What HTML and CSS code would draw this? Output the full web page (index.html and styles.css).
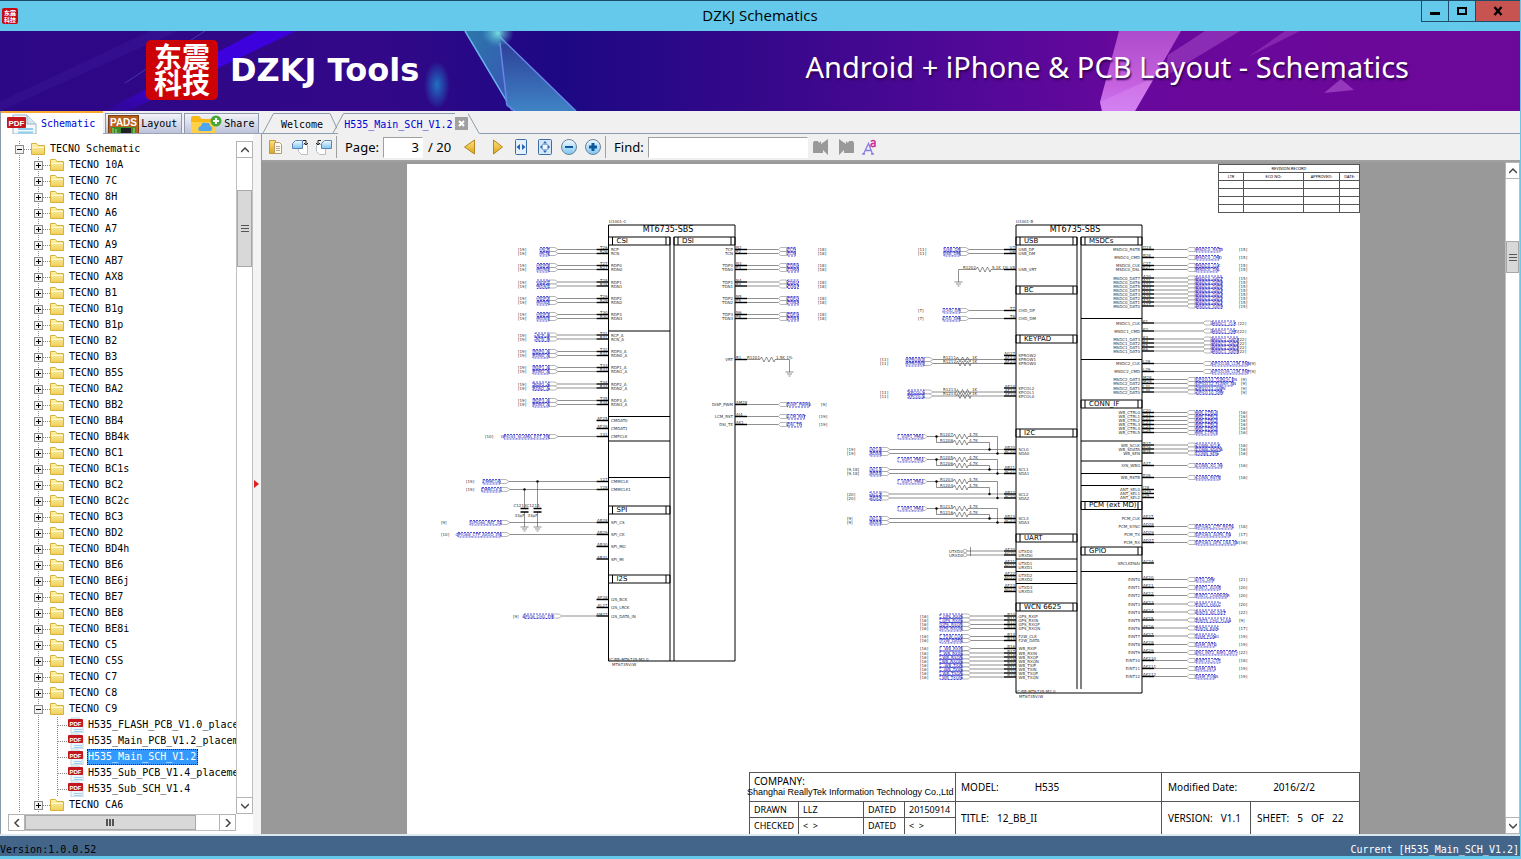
FILE: index.html
```html
<!DOCTYPE html>
<html lang="en">

<head>
    <meta charset="UTF-8">
    <meta name="viewport" content="width=device-width, initial-scale=1.0">
    <title>DZKJ Schematics</title>
    <link rel="stylesheet" href="styles.css">
</head>

<body>
    <!-- shared icons -->
    <svg class="defs" aria-hidden="true">
        <defs>
            <linearGradient id="gFolder" x1="0" y1="0" x2="0" y2="1">
                <stop offset="0" stop-color="#fff3b0" />
                <stop offset="1" stop-color="#f0cf58" />
            </linearGradient>
            <linearGradient id="gGold" x1="0" y1="0" x2="0" y2="1">
                <stop offset="0" stop-color="#ffe27a" />
                <stop offset="1" stop-color="#d9a520" />
            </linearGradient>
            <linearGradient id="gBlue" x1="0" y1="0" x2="0" y2="1">
                <stop offset="0" stop-color="#f4fbff" />
                <stop offset="1" stop-color="#7cc4f0" />
            </linearGradient>
        </defs>
        <symbol id="folder" viewBox="0 0 14 14">
            <path d="M.5 12.500v-11h5l1.500 2h6.500v9z" fill="url(#gFolder)" stroke="#d8b13c" />
            <path d="M1 5.500h12" stroke="#fff8d0" />
        </symbol>
        <symbol id="pdf" viewBox="0 0 16 16">
            <path d="M3 1h8l4 4v11H3z" fill="#eef6fc" stroke="#a9c4d8" stroke-width=".7" />
            <path d="M6 12.500h8M6 14.500h8" stroke="#9fd0ee" />
            <rect x="0" y="2" width="15" height="8" rx="1" fill="#c4161c" />
            <text x="7.500" y="8.500" text-anchor="middle" class="pdf-text">PDF</text>
        </symbol>
    </svg>

    <header class="titlebar">
        <svg class="app-icon" viewBox="0 0 16 16">
            <rect width="16" height="16" rx="2" fill="#c80a10" />
            <text x="8" y="7" text-anchor="middle" class="seal-small">东震</text>
            <text x="8" y="14" text-anchor="middle" class="seal-small">科技</text>
        </svg>
        <h1>DZKJ Schematics</h1>
        <div class="window-buttons">
            <button aria-label="Minimize"><svg width="10" height="10"><rect y="6" width="10" height="3" /></svg></button>
            <button aria-label="Maximize"><svg width="10" height="10"><rect x="1" y="2" width="8" height="6" fill="none" stroke="#000" stroke-width="2" /></svg></button>
            <button class="close" aria-label="Close"><svg width="10" height="10"><path d="M1.500 1l7 8M8.500 1l-7 8" stroke="#000" stroke-width="2.400" /></svg></button>
        </div>
    </header>

    <div class="banner">
        <svg class="banner-art" viewBox="0 0 1520 80" preserveAspectRatio="none" aria-hidden="true">
            <defs>
                <linearGradient id="bBase">
                    <stop offset="0" stop-color="#2c0786" />
                    <stop offset=".25" stop-color="#320888" />
                    <stop offset=".37" stop-color="#1d0884" />
                    <stop offset=".5" stop-color="#35088a" />
                    <stop offset=".66" stop-color="#560899" />
                    <stop offset=".75" stop-color="#69089c" />
                    <stop offset="1" stop-color="#6c0899" />
                </linearGradient>
                <linearGradient id="bBeam" x1="1" y1="0" x2="0" y2="1">
                    <stop offset="0" stop-color="#3d00dc" />
                    <stop offset=".6" stop-color="#3c02e0" />
                    <stop offset="1" stop-color="#3c02e0" stop-opacity=".1" />
                </linearGradient>
                <linearGradient id="bCyan" x1="0" y1="0" x2="1" y2="1">
                    <stop offset="0" stop-color="#2a78a8" />
                    <stop offset="1" stop-color="#3d52b8" />
                </linearGradient>
                <linearGradient id="bTri" x1="0" y1="0" x2="0" y2="1">
                    <stop offset="0" stop-color="#2c3a94" />
                    <stop offset="1" stop-color="#3f83c4" />
                </linearGradient>
                <linearGradient id="bPink" x1="0" y1="0" x2="0" y2="1">
                    <stop offset="0" stop-color="#ac4bcb" />
                    <stop offset=".7" stop-color="#c763e0" />
                    <stop offset="1" stop-color="#c878f0" />
                </linearGradient>
                <radialGradient id="bGlow">
                    <stop offset="0" stop-color="#1f7cc8" stop-opacity=".9" />
                    <stop offset="1" stop-color="#1f7cc8" stop-opacity="0" />
                </radialGradient>
                <radialGradient id="bSpark">
                    <stop offset="0" stop-color="#7fe8e8" stop-opacity=".9" />
                    <stop offset="1" stop-color="#4fc0d0" stop-opacity="0" />
                </radialGradient>
            </defs>
            <rect width="1520" height="80" fill="url(#bBase)" />
            <path d="M258 0h38L128 80h-24z" fill="url(#bBeam)" />
            <path d="M150 0h28L0 80h-20z" fill="#4a2aa8" opacity=".22" />
            <path d="M205 0L125 52" stroke="#6060c8" opacity=".5" />
            <path d="M465 0h35l12 80z" fill="url(#bCyan)" />
            <path d="M465 0l47 79" stroke="#6ab4ee" stroke-width="1.500" />
            <path d="M500 6l76 74h-63l-7-6z" fill="url(#bTri)" />
            <path d="M500 6l76 74M500 12l7 62 8 6" fill="none" stroke="#6686e8" stroke-width="1.500" />
            <ellipse cx="498" cy="2" rx="16" ry="14" fill="url(#bSpark)" />
            <ellipse cx="437" cy="54" rx="13" ry="24" fill="url(#bGlow)" />
            <path d="M1205 0h35l-76 46 4-22z" fill="#9638bc" opacity=".75" />
            <path d="M1285 0h15l-52 26z" fill="#9638bc" opacity=".6" />
            <path d="M1119 0h62l-46 80h-33l-2-9z" fill="url(#bPink)" />
            <path d="M1100 71l55-25-20 34h-33z" fill="#dc8cf4" opacity=".45" />
            <path d="M1324 62l17-14 13 11z" fill="#9638bc" />
        </svg>
        <div class="seal">东震<br>科技</div>
        <strong>DZKJ Tools</strong>
        <p>Android + iPhone &amp; PCB Layout - Schematics</p>
    </div>

    <main>
        <aside class="sidebar">
            <div class="side-tabs">
                <button class="side-tab active">
                    <svg width="32" height="20" viewBox="0 0 32 20">
                        <path d="M6 1h14l9 9v10H6z" fill="#f4f9fd" stroke="#9db4c4" />
                        <path d="M20 1v9h9" fill="#d6e6f2" stroke="#9db4c4" />
                        <path d="M11 15h15M11 18.500h15" stroke="#90cdf0" stroke-width="2" />
                        <rect y="3" width="19" height="11" rx="1" fill="#c4161c" />
                        <text x="9.500" y="11.500" text-anchor="middle" class="pdf-big">PDF</text>
                    </svg>Schematic
                </button>
                <button class="side-tab">
                    <svg width="31" height="18" viewBox="0 0 31 18">
                        <rect x=".5" y=".5" width="30" height="18" fill="#b8601c" stroke="#7c4010" />
                        <path d="M3 12h25v6H3z" fill="#3c8c2c" />
                        <path d="M13 13h10v5H13z" fill="#222" />
                        <path d="M5 13v5M8 14v4M26 13v5" stroke="#a8e070" />
                        <text x="15.500" y="10.500" text-anchor="middle" class="pads-text">PADS</text>
                    </svg>Layout
                </button>
                <button class="side-tab share">
                    <svg width="32" height="18" viewBox="0 0 32 18">
                        <path d="M1 18V3q0-2 2-2h6l3 3h11q2 0 2 2v12z" fill="#f9b816" />
                        <path d="M1 7h24v11H1z" fill="#ffd04a" />
                        <path d="M9 16q-2-4 2-5 1-5 5-3 4-1 4 3 4 1 1 5z" fill="#4ea6ee" />
                        <circle cx="26" cy="6" r="5.500" fill="#46a838" />
                        <path d="M26 3v6M23 6h6" stroke="#fff" stroke-width="2" />
                    </svg>Share
                </button>
            </div>
            <div class="tree-panel">
                <div class="tree" id="tree"></div>
                <div class="scroll vertical">
                    <button aria-label="Scroll up"><svg width="8" height="8"><path d="M0 6l4-4 4 4" /></svg></button>
                    <div class="track"><div class="thumb"></div></div>
                    <button aria-label="Scroll down"><svg width="8" height="8"><path d="M0 2l4 4 4-4" /></svg></button>
                </div>
                <div class="scroll horizontal">
                    <button aria-label="Scroll left"><svg width="8" height="8"><path d="M6 0L2 4l4 4" /></svg></button>
                    <div class="track"><div class="thumb"></div></div>
                    <button aria-label="Scroll right"><svg width="8" height="8"><path d="M2 0l4 4-4 4" /></svg></button>
                </div>
            </div>
            <div class="splitter"><svg width="5" height="8"><path d="M0 0l5 4-5 4z" fill="#e02020" /></svg></div>
        </aside>

        <section class="content">
            <nav class="doc-tabs">
                <button class="doc-tab">
                    <svg width="12" height="21"><path d="M.5 21L11.500 .5H12" /></svg>
                    <span>Welcome</span>
                    <svg width="8" height="21"><path d="M0 .5l7 15" /></svg>
                </button>
                <div class="doc-tab active">
                    <svg width="12" height="21"><path d="M.5 21L11.500 .5H12" /></svg>
                    <span>H535_Main_SCH_V1.2</span>
                    <button class="tab-close" aria-label="Close tab"><svg width="7" height="7"><path d="M1 1l5 5M6 1L1 6" /></svg></button>
                    <svg width="12" height="21"><path d="M0 .5L11.500 21" /></svg>
                </div>
                <div class="tab-rest"></div>
            </nav>

            <div class="toolbar">
                <button aria-label="Open"><svg width="16" height="16">
                    <path d="M1.500 1.500h6v13h-6z" fill="url(#gGold)" stroke="#c8963c" />
                    <path d="M6.500 3.500h5l2 2v9h-7z" fill="#fdfaf0" stroke="#b89a6a" />
                    <path d="M8 7.500h4M8 9.500h4M8 11.500h4" stroke="#b8a888" />
                </svg></button>
                <button aria-label="Rotate right"><svg width="16" height="16">
                    <path d="M6.500 5.500h9v10h-6l-3-3z" fill="#fff" stroke="#b4bcc8" />
                    <path d="M3.500 1.500h7v8h-10v-5z" fill="url(#gBlue)" stroke="#5a84b8" />
                    <path d="M11 1.500h3v4M12 4l2 2 2-2" fill="none" stroke="#222" />
                </svg></button>
                <button aria-label="Rotate left"><svg width="16" height="16">
                    <path d="M.5 5.500h9v10h-6l-3-3z" fill="#fff" stroke="#b4bcc8" />
                    <path d="M8.500 1.500h7v8h-10v-5z" fill="url(#gBlue)" stroke="#5a84b8" />
                    <path d="M5 1.500H2v4M0 4l2 2 2-2" fill="none" stroke="#222" />
                </svg></button>
                <i class="sep"></i>
                <label for="page">Page:</label>
                <input type="text" id="page" value="3">
                <span class="total">/ 20</span>
                <button class="wide" aria-label="Previous page"><svg width="16" height="16"><path d="M12.500 1v14l-10-7z" fill="url(#gGold)" stroke="#b4861c" /></svg></button>
                <button class="wide" aria-label="Next page"><svg width="16" height="16"><path d="M4.500 1v14l9-7z" fill="url(#gGold)" stroke="#b4861c" /></svg></button>
                <button aria-label="Fit width"><svg width="16" height="16">
                    <rect x="2.500" y=".5" width="11" height="15" rx="1" fill="#e4f1fc" stroke="#3c6ca8" />
                    <path d="M7 5v6L3.500 8zM9 5v6l3.500-3z" fill="#2864b0" />
                </svg></button>
                <button aria-label="Fit page"><svg width="16" height="16">
                    <rect x="1.500" y=".5" width="13" height="15" rx="1" fill="#d4e6f8" stroke="#3c6ca8" />
                    <path d="M8 2l2 2.500H6zM8 14l2-2.500H6zM3 8l2-2v4zM13 8l-2-2v4z" fill="#2864b0" />
                    <rect x="5.500" y="5.500" width="5" height="5" fill="#eef6fd" stroke="#8ab0dc" />
                </svg></button>
                <button aria-label="Zoom out"><svg width="16" height="16">
                    <circle cx="8" cy="8" r="7.500" fill="url(#gBlue)" stroke="#6a8498" />
                    <path d="M4 8h8" stroke="#0c5a9c" stroke-width="2" />
                </svg></button>
                <button aria-label="Zoom in"><svg width="16" height="16">
                    <circle cx="8" cy="8" r="7.500" fill="url(#gBlue)" stroke="#6a8498" />
                    <path d="M4 8h8M8 4v8" stroke="#0c5a9c" stroke-width="3" />
                </svg></button>
                <i class="sep"></i>
                <label for="find">Find:</label>
                <input type="text" id="find">
                <button aria-label="Find previous"><svg width="16" height="16" fill="#999">
                    <path d="M1 2h4l1 2 2-2v3l7-5v16l-5-5v3H0V4z" />
                </svg></button>
                <button class="next-hit" aria-label="Find next"><svg width="16" height="16" fill="#999">
                    <path d="M15 2h-4l-1 2-2-2v3L1 0v16l5-5v3h10V4z" />
                </svg></button>
                <button aria-label="Match case"><svg width="16" height="16" fill="none">
                    <path d="M1.500 15L6.500 4.500 10.500 15M3 11.500h6.500M0 15h3M9 15h3" stroke="#8c7ce8" stroke-width="1.300" />
                    <path d="M9 2.500q2-2 4 0V8M13 4.500H10.500Q8.500 5 9 7q2 1.500 4-.5" stroke="#d02c98" stroke-width="1.500" />
                </svg></button>
            </div>

            <div class="viewer">
                <div class="canvas">
                    <article class="sheet">
                        <table class="revision">
                            <colgroup>
                                <col class="r1"><col class="r2"><col class="r3"><col class="r4">
                            </colgroup>
                            <tr><th colspan="4">REVISION RECORD</th></tr>
                            <tr><th>LTR</th><th>ECO NO:</th><th>APPROVED:</th><th>DATE:</th></tr>
                            <tr><td></td><td></td><td></td><td></td></tr>
                            <tr><td></td><td></td><td></td><td></td></tr>
                            <tr><td></td><td></td><td></td><td></td></tr>
                            <tr><td></td><td></td><td></td><td></td></tr>
                        </table>
                        <svg id="schematic" class="schematic" viewBox="407 213 953 560"></svg>
                        <table class="title-block">
                            <colgroup>
                                <col class="c1"><col class="c2"><col class="c3"><col class="c4"><col class="c5"><col class="c6"><col class="c7">
                            </colgroup>
                            <tr class="tall">
                                <td colspan="4" class="company">COMPANY:<small>Shanghai ReallyTek Information Technology Co.,Ltd</small></td>
                                <td><span class="pair model">MODEL: <b>H535</b></span></td>
                                <td colspan="2" class="wide-pad"><span class="pair date">Modified Date: <b>2016/2/2</b></span></td>
                            </tr>
                            <tr>
                                <td class="fine">DRAWN</td>
                                <td class="fine">LLZ</td>
                                <td class="fine">DATED</td>
                                <td class="fine">20150914</td>
                                <td rowspan="2"><span class="pair">TITLE: <b>12_BB_II</b></span></td>
                                <td rowspan="2" class="wide-pad"><span class="pair">VERSION: <b>V1.1</b></span></td>
                                <td rowspan="2" class="wide-pad"><span class="pair">SHEET: <b>5</b> <b>OF</b> <b>22</b></span></td>
                            </tr>
                            <tr>
                                <td class="fine">CHECKED</td>
                                <td class="fine">&lt;&nbsp; &gt;</td>
                                <td class="fine">DATED</td>
                                <td class="fine">&lt;&nbsp; &gt;</td>
                            </tr>
                        </table>
                    </article>
                </div>
                <div class="scroll vertical">
                    <button aria-label="Page up"><svg width="8" height="8"><path d="M0 6l4-4 4 4" /></svg></button>
                    <div class="track"><div class="thumb"></div></div>
                    <button aria-label="Page down"><svg width="8" height="8"><path d="M0 2l4 4 4-4" /></svg></button>
                </div>
            </div>
        </section>
    </main>

    <footer class="statusbar">
        <span>Version:1.0.0.52</span>
        <span class="current">Current [H535_Main_SCH_V1.2]</span>
    </footer>

    <script src="script.js"></script>
</body>

</html>
```

FILE: styles.css
```css
* {
    box-sizing: border-box;
}

body {
    margin: 0;
    height: 100vh;
    display: flex;
    flex-direction: column;
    overflow: hidden;
    background-color: #64c9ea;
    border-right: 1px solid #64c9ea;
    border-bottom: 3px solid #64c9ea;
    font-family: "DejaVu Sans Mono", "Noto Sans CJK SC", monospace;
    font-size: 10px;
    color: #000;
}

button {
    border: none;
    padding: 0;
    background: none;
    font: inherit;
    color: inherit;
    display: flex;
    align-items: center;
    justify-content: center;
}

svg {
    display: block;
    flex: none;
}

.defs {
    position: absolute;
    width: 0;
    height: 0;
}

.pdf-text,
.pdf-big,
.pads-text {
    font-family: "Liberation Sans", sans-serif;
    font-weight: bold;
    fill: #fff;
}

.pdf-text {
    font-size: 6px;
}

.pdf-big {
    font-size: 8px;
}

.pads-text {
    font-size: 10px;
}

/* Title bar */
.titlebar {
    height: 31px;
    flex: none;
    display: grid;
    grid-template-columns: 1fr auto 1fr;
    align-items: center;
    border-top: 1px solid #1b4d68;
}

.app-icon {
    width: 16px;
    height: 16px;
    margin-left: 2px;
    overflow: visible;
}

.seal-small {
    font-family: "Noto Sans CJK SC", sans-serif;
    font-size: 6px;
    font-weight: bold;
    fill: #fff;
}

.titlebar h1 {
    margin: 0 0 2px;
    font-family: "Open Sans", sans-serif;
    font-size: 15px;
    font-weight: normal;
}

.window-buttons {
    display: flex;
    justify-self: end;
    align-self: start;
}

.window-buttons button {
    width: 27px;
    height: 21px;
    border: 1px solid #1b4d68;
    border-width: 0 0 1px 1px;
}

.window-buttons .close {
    width: 45px;
    background-color: #c75450;
}

/* Banner */
.banner {
    position: relative;
    height: 80px;
    flex: none;
    display: flex;
    align-items: center;
    padding: 0 111px 2px 146px;
    color: #fff;
    font-family: "Noto Sans", sans-serif;
}

.banner-art {
    position: absolute;
    inset: 0;
    width: 100%;
    height: 100%;
}

.seal {
    position: relative;
    width: 72px;
    height: 60px;
    margin-right: 12px;
    padding-top: 3px;
    text-align: center;
    border-radius: 5px;
    background-color: #cc0206;
    font-family: "Noto Sans CJK SC", sans-serif;
    font-size: 28px;
    font-weight: bold;
    line-height: 26px;
}

.banner strong {
    position: relative;
    font-family: "DejaVu Sans", sans-serif;
    font-size: 32px;
}

.banner p {
    position: relative;
    margin: 0 0 8px auto;
    font-size: 29px;
    white-space: nowrap;
    text-shadow: 1px 2px 2px #300050;
}

/* Main area */
main {
    flex: 1;
    min-height: 0;
    display: flex;
    background-color: #f0f0f0;
    border-bottom: 2px solid #dce8f0;
}

.sidebar {
    width: 262px;
    flex: none;
    display: grid;
    grid-template-columns: 1fr 9px;
    grid-template-rows: 23px 1fr;
    border-left: 1px solid #8a9aa8;
}

.side-tabs {
    grid-column: 1 / 3;
    display: flex;
    align-items: flex-end;
    gap: 2px;
    border-bottom: 1px solid #9aa4b4;
}

.side-tab {
    height: 20px;
    gap: 2px;
    padding: 0 4px 0 2px;
    border: 1px solid #8c98b0;
    border-bottom: none;
    background: linear-gradient(#f4f4f8, #bcc2dc);
}

.side-tab.active {
    height: 23px;
    padding: 0 8px 0 6px;
    margin-bottom: -1px;
    border: none;
    border-top: 2px solid #f8a830;
    background: #fff;
    color: #0000d8;
}

.side-tab.share {
    padding-left: 5px;
}

.tree-panel {
    min-height: 0;
    display: grid;
    grid-template-columns: 1fr 17px;
    grid-template-rows: 1fr 17px;
    padding: 7px 0 3px;
    background-color: #fff;
}

.splitter {
    display: flex;
    align-items: center;
    padding-left: 1px;
    background-color: #f4f4f4;
    border-right: 1px solid #8a9ab0;
}

/* Tree */
.tree {
    min-width: 0;
    min-height: 0;
    overflow: hidden;
    padding-left: 14px;
}

.tree ul {
    margin: 0;
    padding: 0;
    list-style: none;
}

.tree ul ul {
    padding-left: 19px;
}

.tree li {
    background: repeating-linear-gradient(#888 0 1px, transparent 1px 2px) 4px 0 / 1px 100% no-repeat;
}

.row {
    height: 16px;
    display: flex;
    align-items: center;
    white-space: nowrap;
}

.toggle {
    width: 9px;
    height: 9px;
    flex: none;
    border: 1px solid #8c8c8c;
    background-color: #f2f2f2;
}

.toggle path {
    stroke: #000;
}

.dash {
    width: 7px;
    flex: none;
    border-top: 1px dotted #888;
}

.leaf .dash {
    width: 12px;
    margin-left: 4px;
}

.row .icon {
    width: 14px;
    height: 14px;
    margin-right: 4px;
}

.leaf .icon {
    width: 16px;
    height: 16px;
    margin: 0 3px 0 -1px;
}

.name {
    padding: 0 1px;
    line-height: 16px;
}

.name.selected {
    padding-right: 2px;
    background-color: #3399ff;
    color: #fff;
    outline: 1px dotted #3a2200;
    outline-offset: -1px;
}

/* Scroll bars */
.scroll {
    display: flex;
    background-color: #fff;
}

.scroll.vertical {
    flex-direction: column;
}

.scroll.horizontal {
    margin-left: 7px;
}

.scroll button {
    width: 17px;
    height: 17px;
    flex: none;
    border: 1px solid #b4b4b4;
    background-color: #fff;
}

.scroll.vertical button {
    width: 100%;
}

.scroll button path {
    fill: none;
    stroke: #444;
    stroke-width: 1.5;
}

.track {
    flex: 1;
    display: flex;
    border: 1px solid #c0c0c0;
    border-width: 0 1px;
}

.horizontal .track {
    border-width: 1px 0;
}

.thumb {
    background: linear-gradient(90deg, #555 0 2px, transparent 2px 3px, #555 3px 5px, transparent 5px 6px, #555 6px 8px) center / 8px 7px no-repeat #d8d8d8;
    border: 1px solid #a8a8a8;
}

.vertical .thumb {
    width: 100%;
    height: 12%;
    margin-top: 32px;
    background: linear-gradient(#555 0 1px, transparent 1px 3px, #555 3px 4px, transparent 4px 6px, #555 6px 7px) center / 8px 7px no-repeat #d8d8d8;
}

.horizontal .thumb {
    width: 88%;
}

/* Document tabs */
.content {
    flex: 1;
    min-width: 0;
    display: flex;
    flex-direction: column;
}

.doc-tabs {
    height: 23px;
    flex: none;
    display: flex;
    align-items: flex-end;
}

.doc-tab {
    height: 21px;
    display: flex;
    align-items: center;
    border-bottom: 1px solid #8c9cac;
}

.doc-tab > svg path {
    fill: none;
    stroke: #8c9cac;
}

.doc-tab span {
    height: 21px;
    padding: 0 7px;
    line-height: 22px;
    border-top: 1px solid #8c9cac;
}

.doc-tab.active {
    margin-left: -6px;
    border-color: transparent;
    color: #0000d8;
}

.doc-tab.active span {
    padding: 0 2px 0 0;
}

.tab-close {
    width: 13px;
    height: 13px;
    background-color: #a0a0a0;
}

.tab-close path {
    stroke: #fff;
    stroke-width: 2;
}

.tab-rest {
    flex: 1;
    border-bottom: 1px solid #8c9cac;
}

/* Toolbar */
.toolbar {
    height: 28px;
    flex: none;
    display: flex;
    align-items: center;
    gap: 8px;
    padding-left: 6px;
    border-bottom: 2px solid #a0a0a0;
    background-color: #f0f0f0;
    font-family: "Noto Sans", sans-serif;
    font-size: 13px;
}

.toolbar button {
    width: 16px;
    height: 16px;
}

.toolbar .wide {
    margin-left: 3px;
}

.toolbar .next-hit {
    margin-left: 1px;
}

.toolbar label {
    margin-right: -4px;
}

.sep {
    width: 1px;
    height: 22px;
    margin-left: -4px;
    background-color: #a0a0a0;
}

.toolbar input {
    height: 21px;
    margin-right: -3px;
    padding: 0 3px;
    border: 1px solid #fff;
    border-top-color: #a0a0a0;
    border-left-color: #a0a0a0;
    background-color: #fff;
    font: inherit;
}

#page {
    width: 40px;
    text-align: right;
}

#find {
    width: 160px;
}

/* Viewer */
.viewer {
    flex: 1;
    min-height: 0;
    display: flex;
    background-color: #999;
}

.canvas {
    flex: 1;
    display: flex;
    justify-content: center;
    padding-top: 2px;
    overflow: hidden;
}

.viewer .scroll.vertical {
    width: 15px;
}

.viewer .vertical .thumb {
    height: 32px;
    margin-top: 62px;
}

.sheet {
    width: 77%;
    max-width: 953px;
    background-color: #fff;
    display: flex;
    flex-direction: column;
    align-items: flex-end;
}

.schematic {
    width: 100%;
    height: auto;
    margin-top: -1px;
    font-family: "DejaVu Sans", sans-serif;
    font-size: 4px;
}

table {
    border-collapse: collapse;
    table-layout: fixed;
}

.revision {
    width: 142px;
    font-family: "Noto Sans", sans-serif;
    font-size: 4px;
    line-height: 6px;
}

.revision th,
.revision td {
    height: 8px;
    padding: 0;
    border: 1px solid #555;
    font-weight: normal;
}

.r1 {
    width: 25px;
}

.r3 {
    width: 36px;
}

.r4 {
    width: 20px;
}

.title-block {
    width: 611px;
    font-family: "Noto Sans", sans-serif;
    font-size: 10px;
    line-height: 12px;
    white-space: nowrap;
}

.title-block td {
    height: 16px;
    padding: 0 0 0 5px;
    border: 1px solid #555;
    border-bottom: none;
}

.title-block .tall td {
    height: 29px;
}

.title-block .company {
    padding-left: 4px;
    line-height: 11px;
}

.title-block .fine {
    padding-left: 4px;
    font-size: 9px;
}

.title-block .wide-pad {
    padding-left: 6px;
}

.company small {
    display: block;
    margin-left: -7px;
    font-family: "Liberation Sans", sans-serif;
    font-size: 9px;
}

.title-block b {
    font-weight: normal;
}

.pair {
    display: flex;
    gap: 8px;
}

.pair.model,
.pair.date {
    gap: 36px;
}

.c1 {
    width: 49px;
}

.c2 {
    width: 65px;
}

.c3 {
    width: 41px;
}

.c4 {
    width: 51px;
}

.c5 {
    width: 206px;
}

.c6 {
    width: 89px;
}

/* Schematic parts */
.chip {
    fill: none;
    stroke: #000;
}

.chip-title {
    font-size: 8px;
}

.block-name {
    font-size: 7px;
}

.stub {
    stroke: #000;
    stroke-width: 1.4;
}

.wire {
    fill: none;
    stroke: #444;
    stroke-width: 0.6;
}

.tag {
    fill: #fff;
    stroke: #888;
    stroke-width: 0.6;
}

.net {
    fill: #2222b4;
}

.net-box {
    fill: none;
    stroke: #2a2ad0;
    stroke-width: 0.8;
    stroke-dasharray: 2 1;
}

.small {
    fill: #333;
}

.end {
    text-anchor: end;
}

.middle {
    text-anchor: middle;
}

/* Status bar */
.statusbar {
    height: 20px;
    flex: none;
    display: flex;
    justify-content: space-between;
    align-items: flex-end;
    background-color: #43658a;
    line-height: 12px;
}

.current {
    padding-right: 1px;
    color: #fff;
}
```

FILE: script.js
```js
// ---- folder tree ----
const before = ['10A', '7C', '8H', 'A6', 'A7', 'A9', 'AB7', 'AX8', 'B1', 'B1g', 'B1p', 'B2', 'B3', 'B5S', 'BA2',
    'BB2', 'BB4', 'BB4k', 'BC1', 'BC1s', 'BC2', 'BC2c', 'BC3', 'BD2', 'BD4h', 'BE6', 'BE6j', 'BE7', 'BE8', 'BE8i',
    'C5', 'C5S', 'C7', 'C8'];
const files = ['H535_FLASH_PCB_V1.0_placement', 'H535_Main_PCB_V1.2_placement', 'H535_Main_SCH_V1.2',
    'H535_Sub_PCB_V1.4_placement', 'H535_Sub_SCH_V1.4'];

function folder(name, open, inner) {
    const sign = open ? 'M1 3.5h5' : 'M1 3.5h5M3.5 1v5';
    return `<li><div class="row"><button class="toggle" aria-label="Toggle ${name}"><svg width="7" height="7"><path d="${sign}"/></svg></button>` +
        `<i class="dash"></i><svg class="icon"><use href="#folder"/></svg><span class="name">${name}</span></div>` +
        (inner ? `<ul>${inner}</ul>` : '') + '</li>';
}

function leaf(name) {
    const sel = name === 'H535_Main_SCH_V1.2' ? ' selected' : '';
    return `<li><div class="row leaf"><i class="dash"></i><svg class="icon"><use href="#pdf"/></svg><span class="name${sel}">${name}</span></div></li>`;
}

const children = before.map(n => folder('TECNO ' + n)).join('') +
    folder('TECNO C9', true, files.map(leaf).join('')) + folder('TECNO CA6');
document.getElementById('tree').innerHTML = `<ul>${folder('TECNO Schematic', true, children)}</ul>`;

// ---- schematic ----
let out = '';
const text = (x, y, s, cls) => { out += `<text x="${x}" y="${y}" class="${cls || 'small'}">${s}</text>`; };
const path = (d, cls) => { out += `<path d="${d}" class="${cls || 'wire'}"/>`; };
const dot = (x, y) => { out += `<circle cx="${x}" cy="${y}" r="1.2"/>`; };

// header strip of a block, with the square ends
function block(x1, x2, y, name) {
    path(`M${x1} ${y}H${x2}V${y + 8}H${x1}zM${x1 + 4} ${y}v8M${x2 - 4} ${y}v8`, 'chip');
    text(x1 + 8, y + 5.5, name, 'block-name');
}

function net(x, y, w, name, right) {
    out += `<rect x="${x}" y="${y - 2}" width="${w}" height="4.500" class="net-box"/>`;
    out += `<text x="${right ? x : x + w}" y="${y + 1.5}" class="net${right ? '' : ' end'}">${name}</text>`;
}

// pin on the left side of a chip; o = [net, net x, net width, page, page x]
function leftPin(cx, y, name, num, o) {
    path(`M${cx - 12} ${y}H${cx}`, 'stub');
    text(cx - 1, y - 0.5, num, 'small end');
    text(cx + 2.5, y + 1.5, name);
    if (o) {
        const tx = o[1] + o[2];
        path(`M${tx + 9} ${y}H${cx - 12}`);
        path(`M${tx} ${y - 2}h6l3 2-3 2h-6z`, 'tag');
        net(o[1], y, o[2], o[0]);
        text(o[4], y + 1.5, '[' + o[3] + ']');
    }
}

function rightPin(cx, y, name, num, o) {
    path(`M${cx} ${y}h12`, 'stub');
    text(cx + 1, y - 0.5, num);
    text(cx - 2, y + 1.5, name, 'small end');
    if (o) {
        path(`M${cx + 12} ${y}H${o[1] - 9}`);
        path(`M${o[1] - 9} ${y}l2-2h6v4h-6z`, 'tag');
        net(o[1], y, o[2], o[0], true);
        text(o[4], y + 1.5, '[' + o[3] + ']');
    }
}

function resistor(x, y, name, value) {
    path(`M${x} ${y}l1.500-2.500 2.500 5 2.500-5 2.500 5 2.500-5 2.500 5 1-2.500`);
    text(x - 13, y - 0.8, name);
    text(x + 16, y - 0.8, value);
}

function ground(x, y) {
    path(`M${x - 4} ${y}h8M${x - 2.5} ${y + 2}h5M${x - 1} ${y + 4}h2`);
}

// chip 1
path('M608.5 226H735V662H608.5zM670 238V662M674 238V662M608 332H670M608 417.500H670M608 442H670M608 478.500H670', 'chip');
text(609, 224, 'U1001-C');
text(668, 233, 'MT6735-SBS', 'chip-title middle');
block(608.5, 670, 238, 'CSI');
block(674, 735, 238, 'DSI');
block(608.5, 670, 507, 'SPI');
block(608.5, 670, 576, 'I2S');
text(609, 662, 'IC-BB-MT6735-M2.0');
text(612, 667, 'MT6735V/W');

const csi = [[250.5, 'RC', '', 540], [266.5, 'RD', '0', 537], [283, 'RD', '1', 537], [299.5, 'RD', '2', 537], [315.5, 'RD', '3', 537],
    [336, 'RC', '_A', 535], [352.5, 'RD', '0_A', 533], [368.5, 'RD', '1_A', 533], [385, 'RD', '2_A', 533], [401.5, 'RD', '3_A', 533]];
csi.forEach(([y, a, b, x], i) => {
    const p = a === 'RD' ? 'RDP' : 'RCP';
    const n = a === 'RD' ? 'RDN' : 'RCN';
    leftPin(608.5, y, p + b, 'T' + (26 + i), [p + b, x, 549 - x, '19', 518]);
    leftPin(608.5, y + 4, n + b, 'R' + (26 + i), [n + b, x, 549 - x, '19', 518]);
});
leftPin(608.5, 421.5, 'CMDAT0', 'AF25');
leftPin(608.5, 429.5, 'CMDAT1', 'AF26');
leftPin(608.5, 437.5, 'CMPCLK', 'Y31', ['GPIO44_SCAMA_EXT_EN', 504, 45, '10', 485]);
leftPin(608.5, 482.5, 'CMMCLK', 'Y27', ['CMMCLK', 483, 17, '19', 466]);
leftPin(608.5, 490.5, 'CMMCLK1', 'Y28', ['CMMCLK1', 482, 19, '19', 466]);
leftPin(608.5, 523.5, 'SPI_CS', 'AB28', ['GPIO60_RAT_ID', 470, 31, '9', 441]);
leftPin(608.5, 535.5, 'SPI_CK', 'AB29', ['GPIO68_CTP_AVDD_EN', 458, 43, '10', 441]);
leftPin(608.5, 547.5, 'SPI_MO', 'AB30');
leftPin(608.5, 560, 'SPI_MI', 'AB31');
leftPin(608.5, 600.5, 'I2S_BCK', 'AF28');
leftPin(608.5, 608.5, 'I2S_LRCK', 'AL27');
leftPin(608.5, 617, 'I2S_DATA_IN', 'AM27', ['GPIO6_CHG_EN', 524, 29, '9', 513]);

[[524.5, 490.5, 'C1213'], [537.5, 482.5, 'C1214']].forEach(([x, y, n]) => {
    dot(x, y);
    path(`M${x} ${y}V509.500M${x} 513V528`);
    path(`M${x - 4} 509.500h8M${x - 4} 513h8`, 'stub');
    ground(x, 528);
    text(x - 11, 507.5, n);
    text(x - 10, 518, '33pF');
});

[[250.5, 'TC', ''], [266.5, 'TD', '0'], [283, 'TD', '1'], [299.5, 'TD', '2'], [315.5, 'TD', '3']].forEach(([y, a, b], i) => {
    const w = b ? 11 : 8;
    rightPin(735, y, a + 'P' + b, 'N' + (i + 2), [a + 'P' + b, 787.5, w, '18', 818]);
    rightPin(735, y + 4, a + 'N' + b, 'P' + (i + 2), [a + 'N' + b, 787.5, w, '18', 818]);
});
rightPin(735, 360.5, 'VRT', 'R1');
resistor(760, 360.5, 'R1201', '1.5K 1%');
path('M747 360.500H760M775 360.500H789.500V373');
ground(789.5, 373);
rightPin(735, 405.5, 'DISP_PWM', 'AM28', ['DISP_PWM0', 787.5, 22, '9', 821]);
rightPin(735, 417.5, 'LCM_RST', 'AJ4', ['LCM_RST', 787.5, 17, '19', 819]);
rightPin(735, 425.5, 'DSI_TE', 'AK1', ['DSI_TE', 787.5, 14, '19', 819]);

// chip 2
path('M1016 226H1142V694H1016zM1077 238V690M1081 238V690M1016 560H1077M1016 572.500H1077M1016 584.500H1077' +
    'M1081 319.500H1142M1081 360.500H1142M1081 442H1142M1081 462H1142M1081 474.500H1142M1081 486.500H1142M1081 572.500H1142', 'chip');
text(1016, 224, 'U1001-B');
text(1075, 233, 'MT6735-SBS', 'chip-title middle');
[['USB', 238], ['BC', 287], ['KEYPAD', 336], ['I2C', 430], ['UART', 535], ['WCN 6625', 604]].forEach(b => block(1016, 1077, b[1], b[0]));
[['MSDCs', 238], ['CONN_IF', 401], ['PCM (ext MD)', 502.5], ['GPIO', 548]].forEach(b => block(1081, 1142, b[1], b[0]));
text(1016, 694, 'IC-BB-MT6735-M2.0');
text(1019, 699, 'MT6735V/W');

leftPin(1016, 250.5, 'USB_DP', 'U7', ['USB_DP', 944, 16, '11', 918]);
leftPin(1016, 254.5, 'USB_DM', 'U6', ['USB_DM', 944, 16, '11', 918]);
leftPin(1016, 270.5, 'USB_VRT', 'V8');
resistor(976, 270.5, 'R1202', '5.1K 1%');
path('M1004 270.500H991M976 270.500H958.500V283');
ground(958.5, 283);
leftPin(1016, 311.5, 'CHD_DP', 'T7', ['CHD_DP', 943, 17, '7', 918]);
leftPin(1016, 319.5, 'CHD_DM', 'T8', ['CHD_DM', 943, 17, '7', 918]);
leftPin(1016, 356.5, 'KPROW2', 'AG27');
leftPin(1016, 389, 'KPCOL2', 'AF24');
[[360.5, 'KPROW1', 'R1211', 906], [364.5, 'KPROW0', 'R1212', 906], [393, 'KPCOL1', 'R1213', 908], [397, 'KPCOL0', 'R1214', 908]].forEach(([y, n, r, x]) => {
    leftPin(1016, y, n, 'AF23', [n, x, 924 - x, '11', 880]);
    resistor(956, y, r, '1K');
});

[[450.5, 437.5, 'R1207', 'R1208', '19'], [470.5, 460.5, 'R1205', 'R1206', '9,18'], [495, 482.5, 'R1203', 'R1204', '20'], [519.5, 509.5, 'R1215', 'R1216', '9']].forEach(([y, p, r1, r2, pg], i) => {
    leftPin(1016, y, 'SCL' + i, 'AB2' + i, ['SCL' + i, 870, 11, pg, 847]);
    leftPin(1016, y + 4, 'SDA' + i, 'AC2' + i, ['SDA' + i, 870, 11, pg, 847]);
    net(898, p, 25, 'VGP1_PMU');
    path(`M923 ${p - 2}h2l2 2-2 2h-2z`, 'tag');
    path(`M927 ${p}H953M936.500 ${p}v6H953M968 ${p}H997.500V${y + 4}M968 ${p + 6}H989.500V${y}`);
    resistor(953, p, r1, '4.7K');
    resistor(953, p + 6, r2, '4.7K');
    dot(936.5, p);
    dot(989.5, y);
    dot(997.5, y + 4);
});

[552, 564, 576.5, 588.5].forEach((y, i) => {
    leftPin(1016, y, 'UTXD' + i, 'AF2' + i);
    leftPin(1016, y + 4, 'URXD' + i, 'AG2' + i);
});
[[552, 'UTXD0'], [556, 'URXD0']].forEach(([y, n]) => {
    text(949, y + 1.5, n);
    out += `<circle cx="965" cy="${y}" r="1.800" class="tag"/>`;
    path(`M967 ${y}H1004`);
});
path('M970.500 548V557');

[[617, 'GPS_RXIP'], [621, 'GPS_RXIN'], [625.5, 'GPS_RXQP'], [629.5, 'GPS_RXQN'], [637.5, 'F2W_CLK'], [641.5, 'F2W_DATA'],
    [649.5, 'WB_RXIP'], [654, 'WB_RXIN'], [658, 'WB_RXQP'], [662, 'WB_RXQN'], [666, 'WB_TXIP'], [670, 'WB_TXIN'], [674, 'WB_TXQP'], [678, 'WB_TXQN']].forEach(([y, n], i) => {
    leftPin(1016, y, n, 'B' + (10 + i), [n, 940, 22, '16', 920]);
});

// right side of chip 2: y, pin, ball, net, width, page, net x, page x
const pins = [
    [250.5, 'MSDC0_RSTB', 'D28', 'MSDC0_RSTB', 24, '15'],
    [258.5, 'MSDC0_CMD', 'B28', 'MSDC0_CMD', 23, '15'],
    [266.5, 'MSDC0_CLK', 'C27', 'MSDC0_CLK', 22, '15'],
    [270.5, 'MSDC0_DSL', 'E27', 'MSDC0_DSL', 22, '15'],
    [324, 'MSDC1_CLK', 'K1', 'MSDC1_CLK', 23, '22', 1212, 1238],
    [332, 'MSDC1_CMD', 'K2', 'MSDC1_CMD', 23, '22', 1212, 1238],
    [364.5, 'MSDC2_CLK', 'L28', 'GPIO108_LCM_ENN', 36, '9', 1212, 1250],
    [372.5, 'MSDC2_CMD', 'L29', 'GPIO109_LCM_ENP', 36, '9', 1212, 1250],
    [380.5, 'MSDC2_DAT3', 'M28', 'GPIO113_TORCH_EN', 37, '9', 1196, 1241],
    [384.5, 'MSDC2_DAT2', 'M29', 'GPIO112_FLASH_EN', 37, '9', 1196, 1241],
    [389, 'MSDC2_DAT1', 'L31', 'GPIO111_GAIN', 26, '9', 1196, 1241],
    [393, 'MSDC2_DAT0', 'L30', 'GPIO110_DRV', 26, '9', 1196, 1241],
    [446, 'WB_SCLK', 'B27', 'CONN_SCLK', 23, '16'],
    [450, 'WB_SDATA', 'B26', 'CONN_SDATA', 25, '16'],
    [454, 'WB_SEN', 'B25', 'CONN_SEN', 22, '16'],
    [466.5, 'XIN_WBG', 'A27', 'CONN_XO_IN', 26, '16'],
    [478.5, 'WB_RSTB', 'E28', 'CONN_RSTB', 24, '16'],
    [490.5, 'ANT_SEL0', 'J28'],
    [494.5, 'ANT_SEL1', 'H29'],
    [498.5, 'ANT_SEL2', 'J29'],
    [519.5, 'PCM_CLK', 'AE27'],
    [527.5, 'PCM_SYNC', 'AD28', 'GPIO62_CTP_RSTN', 37, '18'],
    [535.5, 'PCM_TX', 'AD29', 'GPIO64_AUPA_EN', 34, '17'],
    [543.5, 'PCM_RX', 'AD27', 'GPIO63_GPS_LNA_EN', 40, '16'],
    [564, 'SRCLKENAI', 'AC24']
];
for (let i = 0; i < 8; i++) {
    pins.push([279 + i * 4, 'MSDC0_DAT' + (7 - i), 'A2' + i, 'MSDC0_DAT' + (7 - i), 26, '15']);
}
for (let i = 0; i < 4; i++) {
    pins.push([340 + i * 4, 'MSDC1_DAT' + (3 - i), 'K' + (3 + i), 'MSDC1_DAT' + (3 - i), 26, '22', 1212, 1238]);
}
for (let i = 0; i < 6; i++) {
    pins.push([413.5 + i * 4, 'WB_CTRL' + i, 'C2' + i, 'WB_CTRL' + i, 21, '16']);
}
[['OTG_DRV', '21'], ['EINT1_AUXR', '20'], ['EINT2_CHARGER', '20'], ['EINT3_HALL', '20'], ['EINT4_SD_DET', '22'], ['EINT5_CHG_FLAG', '9'], ['EINT6_BAR', '17'],
    ['GSM_PONG', '19'], ['GSM_INTG', '19'], ['JRO_INT2_SIM1_DET', '22'], ['EINT10_CTP', '18'], ['GSM_INT1', '19'], ['GSM_PONS', '19']].forEach(([n, pg], i) => {
    pins.push([580.5 + Math.round(i * 16.2) / 2, 'EINT' + i, 'AK2' + i, n, Math.round(n.length * 2.4), pg]);
});
pins.forEach(([y, name, num, n, w, pg, nx, px]) => {
    rightPin(1142, y, name, num, n && [n, nx || 1196, w, pg, px || 1239]);
});

document.getElementById('schematic').innerHTML = out;
```
